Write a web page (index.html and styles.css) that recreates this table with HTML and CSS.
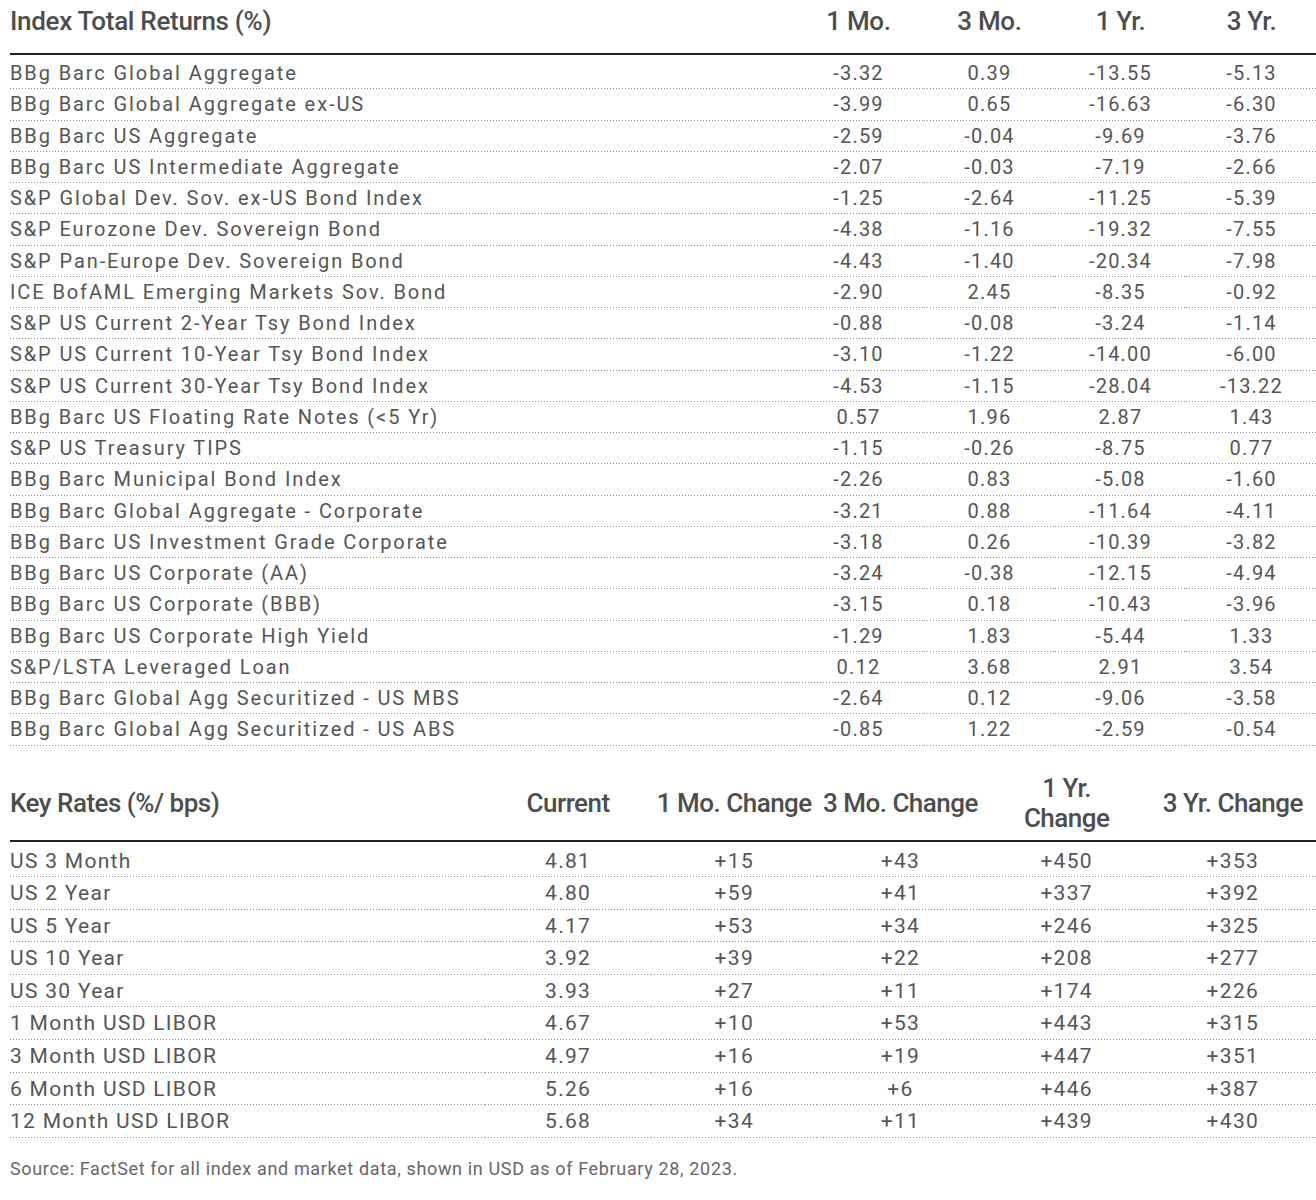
FILE: index.html
```html
<!DOCTYPE html>
<html>
<head>
<meta charset="utf-8">
<link rel="stylesheet" href="styles.css">
</head>
<body>
<div class="page">
<table class="t1">
<colgroup><col class="c-name1"><col class="c-num1"><col class="c-num1"><col class="c-num1"><col class="c-num1"></colgroup>
<thead>
<tr><th class="name">Index Total Returns (%)</th><th>1 Mo.</th><th>3 Mo.</th><th>1 Yr.</th><th>3 Yr.</th></tr>
</thead>
<tbody>
<tr><td>BBg Barc Global Aggregate</td><td>-3.32</td><td>0.39</td><td>-13.55</td><td>-5.13</td></tr>
<tr><td>BBg Barc Global Aggregate ex-US</td><td>-3.99</td><td>0.65</td><td>-16.63</td><td>-6.30</td></tr>
<tr><td>BBg Barc US Aggregate</td><td>-2.59</td><td>-0.04</td><td>-9.69</td><td>-3.76</td></tr>
<tr><td>BBg Barc US Intermediate Aggregate</td><td>-2.07</td><td>-0.03</td><td>-7.19</td><td>-2.66</td></tr>
<tr><td>S&amp;P Global Dev. Sov. ex-US Bond Index</td><td>-1.25</td><td>-2.64</td><td>-11.25</td><td>-5.39</td></tr>
<tr><td>S&amp;P Eurozone Dev. Sovereign Bond</td><td>-4.38</td><td>-1.16</td><td>-19.32</td><td>-7.55</td></tr>
<tr><td>S&amp;P Pan-Europe Dev. Sovereign Bond</td><td>-4.43</td><td>-1.40</td><td>-20.34</td><td>-7.98</td></tr>
<tr><td>ICE BofAML Emerging Markets Sov. Bond</td><td>-2.90</td><td>2.45</td><td>-8.35</td><td>-0.92</td></tr>
<tr><td>S&amp;P US Current 2-Year Tsy Bond Index</td><td>-0.88</td><td>-0.08</td><td>-3.24</td><td>-1.14</td></tr>
<tr><td>S&amp;P US Current 10-Year Tsy Bond Index</td><td>-3.10</td><td>-1.22</td><td>-14.00</td><td>-6.00</td></tr>
<tr><td>S&amp;P US Current 30-Year Tsy Bond Index</td><td>-4.53</td><td>-1.15</td><td>-28.04</td><td>-13.22</td></tr>
<tr><td>BBg Barc US Floating Rate Notes (&lt;5 Yr)</td><td>0.57</td><td>1.96</td><td>2.87</td><td>1.43</td></tr>
<tr><td>S&amp;P US Treasury TIPS</td><td>-1.15</td><td>-0.26</td><td>-8.75</td><td>0.77</td></tr>
<tr><td>BBg Barc Municipal Bond Index</td><td>-2.26</td><td>0.83</td><td>-5.08</td><td>-1.60</td></tr>
<tr><td>BBg Barc Global Aggregate - Corporate</td><td>-3.21</td><td>0.88</td><td>-11.64</td><td>-4.11</td></tr>
<tr><td>BBg Barc US Investment Grade Corporate</td><td>-3.18</td><td>0.26</td><td>-10.39</td><td>-3.82</td></tr>
<tr><td>BBg Barc US Corporate (AA)</td><td>-3.24</td><td>-0.38</td><td>-12.15</td><td>-4.94</td></tr>
<tr><td>BBg Barc US Corporate (BBB)</td><td>-3.15</td><td>0.18</td><td>-10.43</td><td>-3.96</td></tr>
<tr><td>BBg Barc US Corporate High Yield</td><td>-1.29</td><td>1.83</td><td>-5.44</td><td>1.33</td></tr>
<tr><td>S&amp;P/LSTA Leveraged Loan</td><td>0.12</td><td>3.68</td><td>2.91</td><td>3.54</td></tr>
<tr><td>BBg Barc Global Agg Securitized - US MBS</td><td>-2.64</td><td>0.12</td><td>-9.06</td><td>-3.58</td></tr>
<tr><td>BBg Barc Global Agg Securitized - US ABS</td><td>-0.85</td><td>1.22</td><td>-2.59</td><td>-0.54</td></tr>
</tbody>
</table>

<table class="t2">
<colgroup><col class="c-name2"><col class="c-num2"><col class="c-num2"><col class="c-num2"><col class="c-num2"><col class="c-num2"></colgroup>
<thead>
<tr><th class="name">Key Rates (%/ bps)</th><th>Current</th><th>1 Mo. Change</th><th>3 Mo. Change</th><th>1 Yr.<br>Change</th><th>3 Yr. Change</th></tr>
</thead>
<tbody>
<tr><td>US 3 Month</td><td>4.81</td><td>+15</td><td>+43</td><td>+450</td><td>+353</td></tr>
<tr><td>US 2 Year</td><td>4.80</td><td>+59</td><td>+41</td><td>+337</td><td>+392</td></tr>
<tr><td>US 5 Year</td><td>4.17</td><td>+53</td><td>+34</td><td>+246</td><td>+325</td></tr>
<tr><td>US 10 Year</td><td>3.92</td><td>+39</td><td>+22</td><td>+208</td><td>+277</td></tr>
<tr><td>US 30 Year</td><td>3.93</td><td>+27</td><td>+11</td><td>+174</td><td>+226</td></tr>
<tr><td>1 Month USD LIBOR</td><td>4.67</td><td>+10</td><td>+53</td><td>+443</td><td>+315</td></tr>
<tr><td>3 Month USD LIBOR</td><td>4.97</td><td>+16</td><td>+19</td><td>+447</td><td>+351</td></tr>
<tr><td>6 Month USD LIBOR</td><td>5.26</td><td>+16</td><td>+6</td><td>+446</td><td>+387</td></tr>
<tr><td>12 Month USD LIBOR</td><td>5.68</td><td>+34</td><td>+11</td><td>+439</td><td>+430</td></tr>
</tbody>
</table>

<p class="source">Source: FactSet for all index and market data, shown in USD as of February 28, 2023.</p>
</div>
</body>
</html>
```

FILE: styles.css
```css
html, body {
  margin: 0;
  padding: 0;
  background: #ffffff;
}

.page {
  padding-left: 10px;
  font-family: Roboto, "Noto Sans", sans-serif;
  color: #555555;
}

table {
  border-collapse: collapse;
  table-layout: fixed;
  width: 1306px;
}

th {
  font-weight: 500;
  color: #4d4d4d;
  text-align: center;
  padding: 0;
  border-bottom: 2px solid #222222;
  vertical-align: middle;
  white-space: nowrap;
}

th.name, td:first-child {
  text-align: left;
}

td {
  padding: 0;
  text-align: center;
  white-space: nowrap;
  background-image: linear-gradient(to right, #8d929c 1px, transparent 1px);
  background-size: 3px 1px;
  background-repeat: repeat-x;
  background-position: left bottom;
}

/* Table 1 */
.c-name1 { width: 783px; }
.c-num1 { width: 131px; }

.t1 th {
  font-size: 26px;
  letter-spacing: -0.3px;
  height: 53px;
  padding-bottom: 11px;
  box-sizing: border-box;
  vertical-align: top;
  line-height: 42px;
}

.t1 td {
  font-size: 20px;
  letter-spacing: 1.2px;
  line-height: 31.25px;
}

.t1 td:first-child {
  letter-spacing: 1.9px;
}

.t1 tbody tr:first-child td {
  padding-top: 3px;
}

/* Table 2 */
.t2 {
  margin-top: 20px;
}

.c-name2 { width: 475px; }
.c-num2 { width: 166.2px; }

.t2 th {
  font-size: 26px;
  letter-spacing: -0.5px;
  height: 75px;
  line-height: 30px;
  padding-top: 6px;
  padding-bottom: 6px;
  box-sizing: border-box;
}

.t2 td {
  font-size: 21px;
  letter-spacing: 1.3px;
  line-height: 32.6px;
}

.t2 tbody tr:first-child td {
  padding-top: 3px;
}

.source {
  margin: 20px 0 0 0;
  font-size: 18px;
  letter-spacing: 0.65px;
  color: #666666;
}
```
